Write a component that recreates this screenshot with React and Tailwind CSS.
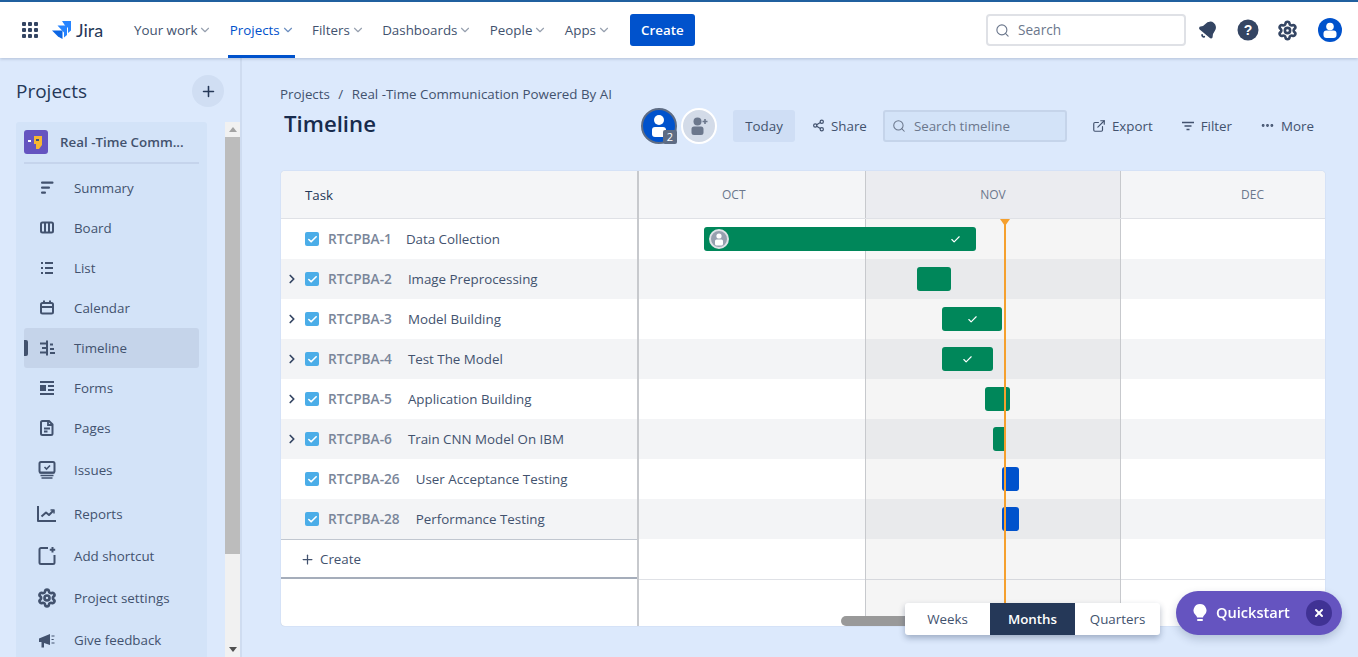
import React from "react";
import { ChevronDown, ChevronRight, Check, Plus, Search, Share2, ExternalLink, X, Settings, Ellipsis, Bell } from "lucide-react";

const INK = "#42526e";

function Svg({ size = 24, className = "", children }) {
  return (
    <svg width={size} height={size} viewBox="0 0 24 24" fill="none" className={className}>
      {children}
    </svg>
  );
}

const navIcons = {
  Summary: (
    <g fill={INK}>
      <rect x="6" y="5.500" width="12.500" height="2.200" rx="1" />
      <rect x="6" y="10.500" width="9" height="2.200" rx="1" />
      <rect x="6" y="15.500" width="5" height="2.200" rx="1" />
    </g>
  ),
  Board: (
    <g stroke={INK} strokeWidth="2">
      <rect x="6" y="6.500" width="12" height="10" rx="1.500" />
      <path d="M10 6.500v10M14 6.500v10" />
    </g>
  ),
  List: (
    <g fill={INK}>
      <rect x="6" y="6" width="2" height="2" />
      <rect x="6" y="11" width="2" height="2" />
      <rect x="6" y="16" width="2" height="2" />
      <rect x="10" y="6" width="8" height="2" />
      <rect x="10" y="11" width="8" height="2" />
      <rect x="10" y="16" width="8" height="2" />
    </g>
  ),
  Calendar: (
    <g stroke={INK} strokeWidth="2">
      <rect x="6" y="7" width="12" height="10.500" rx="1.500" />
      <path d="M6 11h12M9 4.500v3M15 4.500v3" />
    </g>
  ),
  Timeline: (
    <g fill={INK}>
      <rect x="11" y="4.500" width="2" height="15" />
      <rect x="5" y="6.500" width="8" height="2" />
      <rect x="7" y="11" width="6" height="2" />
      <rect x="5" y="15.500" width="6" height="2" />
      <rect x="15" y="7.500" width="3" height="2" />
      <rect x="15" y="12" width="4" height="2" />
      <rect x="15" y="16" width="5" height="2" />
    </g>
  ),
  Forms: (
    <g fill={INK}>
      <rect x="5" y="5" width="14" height="2" />
      <rect x="5" y="9" width="6" height="6" />
      <rect x="13" y="9" width="6" height="2" />
      <rect x="13" y="13" width="6" height="2" />
      <rect x="5" y="17" width="14" height="2" />
    </g>
  ),
  Pages: (
    <g>
      <path d="M7.500 5h6.500l3.500 3.500V17.500a1.500 1.500 0 0 1-1.500 1.500H7.500A1.500 1.500 0 0 1 6 17.500V6.500A1.500 1.500 0 0 1 7.500 5z" stroke={INK} strokeWidth="2" />
      <path d="M9 12.500h6M9 15.500h3.500M13 5v4h4.500" stroke={INK} strokeWidth="1.800" />
    </g>
  ),
  Issues: (
    <g>
      <rect x="4.500" y="4" width="15" height="10.500" rx="1.500" stroke={INK} strokeWidth="2" />
      <path d="M9.500 9l2 2 3.500-3.500" stroke={INK} strokeWidth="1.600" />
      <path d="M4.500 15h15M5.500 17.500h13M6.500 20h11" stroke={INK} strokeWidth="1.700" />
    </g>
  ),
  Reports: (
    <g stroke={INK} strokeWidth="2" strokeLinejoin="round">
      <path d="M3 4v15h18" />
      <path d="M6.500 14.500l4.500-4 3 2.500 4.500-4.500" />
      <path d="M15.500 8h3.500v3.500" strokeWidth="1.500" />
    </g>
  ),
  "Add shortcut": (
    <g stroke={INK} strokeWidth="2">
      <path d="M13 4H6a1.500 1.500 0 0 0-1.500 1.500v13A1.500 1.500 0 0 0 6 20h12a1.500 1.500 0 0 0 1.500-1.500V11" />
      <path d="M17.500 3v5.500M14.800 5.800h5.400" />
    </g>
  ),
  "Give feedback": (
    <g fill={INK}>
      <path d="M4 10.500l11-4.500v11l-6-2v4.500H6.500V14H4z" />
      <rect x="16.500" y="7.500" width="3" height="1" />
      <rect x="16.500" y="11" width="2.200" height="1" />
      <rect x="16.500" y="14.500" width="3" height="1" />
    </g>
  ),
};

const navItems = [
  ["Summary", 40],
  ["Board", 40],
  ["List", 40],
  ["Calendar", 40],
  ["Timeline", 40, true],
  ["Forms", 40],
  ["Pages", 40],
  ["Issues", 44],
  ["Reports", 44],
  ["Add shortcut", 40],
  ["Project settings", 44],
  ["Give feedback", 40],
];

const tasks = [
  { id: "RTCPBA-1", title: "Data Collection", gap: "ml-[14px]", open: false, bar: { ml: "ml-[65px]", w: "w-[272px]", check: "pr-[15px]", avatar: true } },
  { id: "RTCPBA-2", title: "Image Preprocessing", gap: "ml-[16px]", open: true, bar: { ml: "ml-[278px]", w: "w-[34px]" } },
  { id: "RTCPBA-3", title: "Model Building", gap: "ml-[16px]", open: true, bar: { ml: "ml-[303px]", w: "w-[60px]", check: "justify-center" } },
  { id: "RTCPBA-4", title: "Test The Model", gap: "ml-[16px]", open: true, bar: { ml: "ml-[303px]", w: "w-[51px]", check: "justify-center" } },
  { id: "RTCPBA-5", title: "Application Building", gap: "ml-[16px]", open: true, bar: { ml: "ml-[346px]", w: "w-[25px]" } },
  { id: "RTCPBA-6", title: "Train CNN Model On IBM", gap: "ml-[16px]", open: true, bar: { ml: "ml-[354px]", w: "w-[12px]" } },
  { id: "RTCPBA-26", title: "User Acceptance Testing", gap: "ml-[16px]", open: false, bar: { ml: "ml-[363px]", w: "w-[17px]", blue: true } },
  { id: "RTCPBA-28", title: "Performance Testing", gap: "ml-[16px]", open: false, bar: { ml: "ml-[363px]", w: "w-[17px]", blue: true } },
];

function JiraLogo() {
  return (
    <svg width="20" height="20" viewBox="0 0 20 20">
      <path d="M10 1h9v9.500l-3 2.500V8l-1-1h-1z" fill="#2684ff" />
      <path d="M5.500 5.500h9.500V15l-3 2.500v-5l-1-1H11z" fill="#2684ff" />
      <path d="M0 10.500h10.500V19l-4.500-2.500-1-1z" fill="#0c66e4" />
    </svg>
  );
}

function TopNav() {
  const links = ["Your work", "Projects", "Filters", "Dashboards", "People", "Apps"];
  return (
    <header className="h-[58px] shrink-0 bg-white border-t-2 border-[#20609f] shadow-[0_1px_3px_rgba(9,30,66,0.2)] flex items-center pl-[22px] pr-[16px] relative z-30">
      <div className="grid grid-cols-3 gap-[2px] w-[16px]">
        {Array.from({ length: 9 }).map((_, i) => (
          <span key={i} className="w-[4px] h-[4px] bg-[#344563] rounded-[1px]" />
        ))}
      </div>
      <div className="flex items-center ml-[14px] w-[82px]">
        <JiraLogo />
        <span className="text-[18px] text-[#253858] ml-[4px] font-[Lato,sans-serif]">Jira</span>
      </div>
      <nav className="flex items-center gap-[17.4px] h-full">
        {links.map((label) => {
          const active = label === "Projects";
          return (
            <div key={label} className={`relative h-full flex items-center gap-[1px] text-[13.35px] ${active ? "text-[#0052cc] font-medium" : "text-[#42526e]"}`}>
              <span>{label}</span>
              <ChevronDown size={14} strokeWidth={2} className={active ? "text-[#6c8ebf]" : "text-[#97a0af]"} />
              {active && <span className="absolute -left-[2px] right-0 bottom-0 h-[3px] bg-[#0052cc]" />}
            </div>
          );
        })}
      </nav>
      <button className="ml-[19px] w-[65px] h-[32px] bg-[#0052cc] text-white text-[13.35px] font-semibold rounded-[3px]">Create</button>
      <div className="ml-auto w-[200px] h-[32px] border-2 border-[#dfe1e6] rounded-[4px] flex items-center pl-[7px] text-[13.6px] text-[#6b778c]">
        <Search size={15} strokeWidth={1.800} className="text-[#6b778c]" />
        <span className="ml-[8px]">Search</span>
      </div>
      <div className="flex items-center ml-[12px]">
        <Bell size={20} fill="#344563" strokeWidth={2} className="text-[#344563] rotate-[40deg]" />
        <Svg size={24} className="ml-[18px]">
          <circle cx="12" cy="12" r="10.500" fill="#344563" />
          <text x="12" y="17" textAnchor="middle" fontSize="14" fontWeight="700" fontFamily="Liberation Sans, sans-serif" fill="#fff">?</text>
        </Svg>
        <Settings size={21} strokeWidth={3} className="ml-[17px] text-[#344563]" />
        <svg width="24" height="24" viewBox="0 0 24 24" className="ml-[20px]">
          <circle cx="12" cy="12" r="12" fill="#0052cc" />
          <circle cx="12" cy="8.500" r="3.800" fill="#fff" />
          <path d="M5.500 15.500a3 3 0 0 1 3-3h7a3 3 0 0 1 3 3v1.500a3 3 0 0 1-3 3h-7a3 3 0 0 1-3-3z" fill="#fff" />
        </svg>
      </div>
    </header>
  );
}

function SideNav() {
  return (
    <aside className="w-[242px] shrink-0 border-r-2 border-[#cfdcf0] flex flex-col pl-[16px] overflow-hidden">
      <div className="flex items-center justify-between h-[64px] pr-[16px] pt-[2px]">
        <h2 className="text-[19px] font-medium text-[#253858]">Projects</h2>
        <span className="w-[32px] h-[32px] rounded-full bg-[#d0def3] flex items-center justify-center text-[#253858]">
          <Plus size={17} strokeWidth={2.200} />
        </span>
      </div>
      <div className="flex flex-1 min-h-0">
        <div className="w-[191px] bg-[#d3e3f8] rounded-t-[3px] px-[8px]">
          <div className="flex items-center h-[42px] border-b-2 border-[#c5d4ec]">
            <span className="w-[24px] h-[24px] rounded-[3px] bg-[#6554c0] flex items-center justify-center">
              <svg width="18" height="18" viewBox="0 0 18 18">
                <rect x="1" y="7" width="3" height="2" fill="#fff" />
                <path d="M7 3h8v9l-3 4h-3v-5H7z" fill="#f7b731" />
                <rect x="9" y="6" width="3" height="2" fill="#42526e" />
              </svg>
            </span>
            <span className="ml-[12px] text-[13.35px] font-semibold text-[#42526e] whitespace-nowrap">Real -Time Comm...</span>
          </div>
          <ul className="pt-[4px]">
            {navItems.map(([label, h, active]) => (
              <li
                key={label}
                style={{ height: h }}
                className={`relative flex items-center rounded-[3px] text-[13.35px] text-[#42526e] ${active ? "bg-[#c5d4ea]" : ""}`}
              >
                {active && <span className="absolute left-0 top-[12px] w-[4px] h-[16px] bg-[#42526e] rounded-r-[2px]" />}
                <span className="w-[50px] flex justify-center pr-[6px] pl-[2px]">
                  {label === "Project settings" ? (
                    <Settings size={20} strokeWidth={3.200} className="text-[#42526e]" />
                  ) : (
                    <Svg size={24}>{navIcons[label]}</Svg>
                  )}
                </span>
                <span className="whitespace-nowrap">{label}</span>
              </li>
            ))}
          </ul>
        </div>
        <div className="ml-[18px] w-[15px] bg-[#f1f1f1] flex flex-col items-center">
          <span className="h-[15px] flex items-center justify-center">
            <span className="border-x-[4px] border-x-transparent border-b-[5px] border-b-[#a3a3a3]" />
          </span>
          <span className="w-full h-[417px] bg-[#bcbcbc]" />
          <span className="flex-1" />
          <span className="h-[15px] flex items-center justify-center">
            <span className="border-x-[4px] border-x-transparent border-t-[5px] border-t-[#505050]" />
          </span>
        </div>
      </div>
    </aside>
  );
}

function ToolButton({ icon, label }) {
  return (
    <span className="flex items-center gap-[6px] text-[13.35px] font-medium text-[#42526e]">
      {icon}
      {label}
    </span>
  );
}

function Toolbar() {
  return (
    <div className="flex items-center mt-[26px] mr-[11px] h-[32px]">
      <span className="relative w-[36px] h-[36px] rounded-full bg-[#0052cc] border-2 border-[#5e6c84] flex items-center justify-center">
        <svg width="24" height="26" viewBox="0 0 24 26">
          <circle cx="12" cy="7" r="5" fill="#fff" />
          <path d="M5 17a3 3 0 0 1 3-3h8a3 3 0 0 1 3 3v4a3 3 0 0 1-3 3H8a3 3 0 0 1-3-3z" fill="#fff" />
        </svg>
        <span className="absolute -right-[2px] -bottom-[2px] w-[14px] h-[14px] bg-[#5e6c84] rounded-[2px] text-white text-[11px] leading-[14px] text-center">2</span>
      </span>
      <span className="ml-[4px] w-[36px] h-[36px] rounded-full bg-[#d3dbe8] border-2 border-white flex items-center justify-center">
        <svg width="24" height="24" viewBox="0 0 24 24">
          <circle cx="10.500" cy="7.500" r="4" fill="#6b778c" />
          <path d="M4.500 15a2.500 2.500 0 0 1 2.500-2.500h7a2.500 2.500 0 0 1 2.500 2.500v3.500a2.500 2.500 0 0 1-2.500 2.500H7a2.500 2.500 0 0 1-2.500-2.500z" fill="#6b778c" />
          <path d="M18 5v5M15.500 7.500h5" stroke="#6b778c" strokeWidth="1.600" />
        </svg>
      </span>
      <button className="ml-[16px] w-[62px] h-[32px] rounded-[3px] bg-[#cfdef5] text-[13.35px] font-medium text-[#42526e]">Today</button>
      <span className="ml-[17px]">
        <ToolButton icon={<Share2 size={13} strokeWidth={2.200} />} label="Share" />
      </span>
      <div className="ml-[16px] w-[184px] h-[32px] border-2 border-[#c5d4ea] bg-[#d3e3f8] rounded-[3px] flex items-center pl-[7px] text-[13.35px] text-[#6b778c]">
        <Search size={14} strokeWidth={1.800} />
        <span className="ml-[8px]">Search timeline</span>
      </div>
      <span className="ml-[25px]">
        <ToolButton icon={<ExternalLink size={14} strokeWidth={2} />} label="Export" />
      </span>
      <span className="ml-[28px]">
        <ToolButton
          icon={
            <svg width="14" height="14" viewBox="0 0 14 14">
              <path d="M1 3.500h12M3.500 7h7M5.500 10.500h3" stroke="#42526e" strokeWidth="1.600" />
            </svg>
          }
          label="Filter"
        />
      </span>
      <span className="ml-[28px]">
        <ToolButton icon={<Ellipsis size={15} strokeWidth={2.600} />} label="More" />
      </span>
    </div>
  );
}

function TaskRow({ task, index }) {
  return (
    <div className={`h-[40px] flex items-center text-[13.35px] ${index % 2 ? "bg-[#f3f4f6]" : "bg-white"}`}>
      <span className="w-[24px] flex justify-start pl-[4px]">
        {task.open && <ChevronRight size={14} strokeWidth={3} className="text-[#344563]" />}
      </span>
      <span className="w-[14px] h-[14px] rounded-[2px] bg-[#4bade8] flex items-center justify-center">
        <Check size={11} strokeWidth={3.500} className="text-white" />
      </span>
      <span className="ml-[9px] text-[13.7px] font-semibold text-[#7a869a]">{task.id}</span>
      <span className={`${task.gap} text-[#42526e]`}>{task.title}</span>
    </div>
  );
}

function Bar({ bar }) {
  const cut = bar.w === "w-[12px]";
  return (
    <div
      className={`${bar.ml} ${bar.w} h-[24px] ${bar.blue ? "bg-[#0052cc]" : "bg-[#00875a]"} ${cut ? "rounded-l-[3px]" : "rounded-[3px]"} flex items-center ${bar.check || ""} ${bar.avatar ? "justify-between pl-[5px]" : ""}`}
    >
      {bar.avatar && (
        <span className="w-[20px] h-[20px] rounded-full bg-[#97a0af] border-2 border-[#dfe1e6] flex items-center justify-center overflow-hidden">
          <svg width="14" height="14" viewBox="0 0 14 14">
            <circle cx="7" cy="4" r="2.600" fill="#fff" />
            <rect x="3" y="7.500" width="8" height="6" rx="1.500" fill="#fff" />
          </svg>
        </span>
      )}
      {bar.check && <Check size={11} strokeWidth={2.500} className="text-white" />}
    </div>
  );
}

function TimelineTable() {
  return (
    <section className="relative w-[1044px] h-[455px] bg-white rounded-[4px] shadow-[0_0_1px_rgba(9,30,66,0.3)] flex overflow-hidden">
      <div className="w-[358px] shrink-0 border-r-2 border-[#c7c9cd] flex flex-col">
        <div className="h-[48px] bg-[#f4f5f7] border-b border-[#dfe1e6] flex items-center pl-[24px] pt-[1px] text-[13.35px] text-[#253858]">Task</div>
        {tasks.map((t, i) => (
          <TaskRow key={t.id} task={t} index={i} />
        ))}
        <div className="h-[40px] border-t border-[#c1c7d0] border-b-2 border-b-[#a5adba] flex items-center pl-[19px] pt-[1px] text-[13.35px] font-medium text-[#42526e]">
          <Plus size={15} strokeWidth={2} className="mr-[5px]" />
          Create
        </div>
      </div>
      <div className="relative flex-1 flex flex-col">
        <div className="h-[48px] flex border-b border-[#dfe1e6] text-[12px] text-[#6b778c]">
          <span className="w-[226px] bg-[#f4f5f7] flex items-center pl-[83px]">OCT</span>
          <span className="w-[256px] bg-[#ebecf0] border-x border-[#c7c9cd] flex items-center justify-center">NOV</span>
          <span className="flex-1 bg-[#f4f5f7] flex items-center pl-[120px]">DEC</span>
        </div>
        {tasks.map((t, i) => (
          <div key={t.id} className={`h-[40px] flex items-center ${i % 2 ? "bg-[#f3f4f6]" : "bg-white"}`}>
            <div className="relative z-10 flex">
              <Bar bar={t.bar} />
            </div>
          </div>
        ))}
        <div className="h-[41px] border-b border-[#dfe1e6]" />
        {/* november shade and the today marker lie over the rows */}
        <div className="absolute left-[226px] top-[48px] bottom-0 w-[256px] bg-black/[0.04] border-x border-[#c7c9cd]" />
        <div className="absolute left-[365px] top-[48px] bottom-0 w-[2px] bg-[#f5a02e] z-20" />
        <div className="absolute left-[361px] top-[48px] z-20 border-x-[5px] border-x-transparent border-t-[7px] border-t-[#f5a02e]" />
        <div className="absolute left-[202px] bottom-0 w-[70px] h-[10px] rounded-full bg-[#999] z-20" />
      </div>
    </section>
  );
}

function ModeSwitch() {
  const modes = ["Weeks", "Months", "Quarters"];
  return (
    <div className="absolute left-[663px] top-[545px] z-30 flex h-[32px] bg-white rounded-[3px] overflow-hidden shadow-[0_3px_6px_rgba(9,30,66,0.3)] text-[13.35px]">
      {modes.map((m) => (
        <span key={m} className={`w-[85px] flex items-center justify-center ${m === "Months" ? "bg-[#253858] text-white font-semibold" : "text-[#42526e]"}`}>
          {m}
        </span>
      ))}
    </div>
  );
}

export default function App() {
  return (
    <div className="h-screen overflow-hidden flex flex-col bg-[#dce9fc] font-['Open_Sans',sans-serif]">
      <TopNav />
      <div className="flex flex-1 min-h-0">
        <SideNav />
        <main className="relative flex-1 pl-[39px] pt-[26px]">
          <div className="flex justify-between w-[1044px] h-[87px]">
            <div>
              <p className="h-[20px] -ml-[1px] text-[13.35px] leading-[20px] text-[#42526e] whitespace-nowrap">
                Projects <span className="mx-[5px]">/</span> Real -Time Communication Powered By AI
              </p>
              <h1 className="ml-[3px] mt-[4px] text-[22.2px] leading-[32px] font-semibold text-[#172b4d]">Timeline</h1>
            </div>
            <Toolbar />
          </div>
          <TimelineTable />
          <ModeSwitch />
        </main>
      </div>
      <div className="fixed left-[1176px] top-[591px] z-40 w-[166px] h-[44px] rounded-full bg-[#6554c0] shadow-[0_4px_10px_rgba(9,30,66,0.2)] flex items-center pl-[17px] text-white">
        <svg width="14" height="18" viewBox="0 0 14 18">
          <path d="M7 0a6.500 6.500 0 0 1 4 11.600c-.7.600-1 1.200-1 1.900H4c0-.7-.3-1.300-1-1.900A6.500 6.500 0 0 1 7 0z" fill="#fff" />
          <rect x="4" y="15" width="6" height="2" rx="1" fill="#fff" />
        </svg>
        <span className="ml-[9px] text-[14.6px] font-semibold">Quickstart</span>
        <span className="ml-auto mr-[10px] w-[26px] h-[26px] rounded-full bg-[#403294] flex items-center justify-center">
          <X size={12} strokeWidth={4} />
        </span>
      </div>
    </div>
  );
}
